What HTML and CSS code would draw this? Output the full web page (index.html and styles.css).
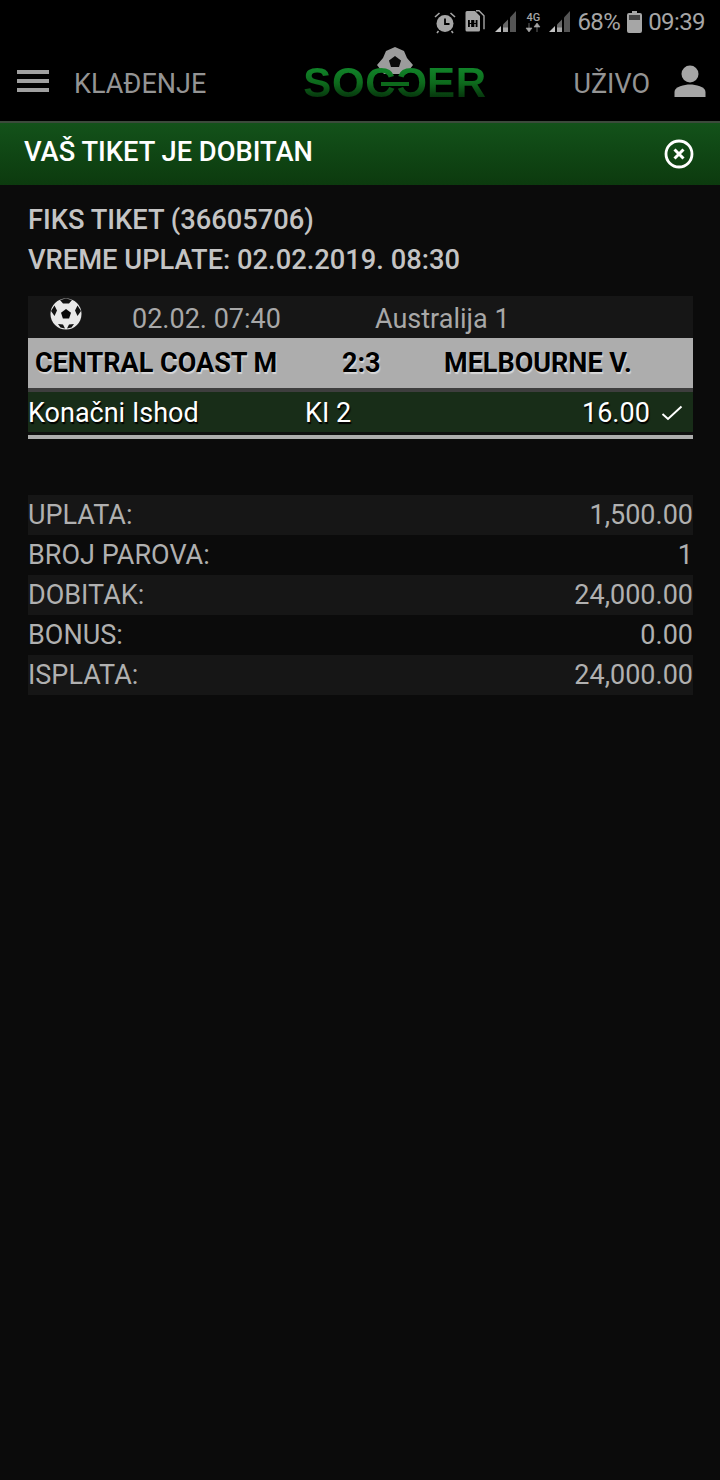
FILE: index.html
```html
<!DOCTYPE html>
<html lang="en">
<head>
    <meta charset="UTF-8">
    <meta name="viewport" content="width=device-width, initial-scale=1.0">
    <title>Tiket</title>
    <link rel="stylesheet" href="styles.css">
</head>
<body>
    <div class="status-bar">
        <svg class="st-alarm" width="22" height="23" viewBox="0 0 22 23">
            <circle cx="11" cy="12.500" r="8.500" fill="#a6a6a6"/>
            <path d="M11 7.500v5.500h4.500" fill="none" stroke="#000" stroke-width="1.800"/>
            <path d="M1 6 5.500 2M21 6 16.500 2M4.500 20l-1.500 2M17.500 20l1.500 2" stroke="#a6a6a6" stroke-width="1.600"/>
        </svg>
        <svg class="st-sim" width="20" height="22" viewBox="0 0 20 22">
            <path d="M2 1h8l5 5v14a1.500 1.500 0 0 1-1.500 1.500H2A1.500 1.500 0 0 1 .500 20V2.500A1.500 1.500 0 0 1 2 1z" fill="#a6a6a6"/>
            <path d="M11 .700h3l5 5v13.500" fill="none" stroke="#a6a6a6" stroke-width="1.400"/>
            <path d="M3 10h9.500v7H3z" fill="#000"/>
            <path d="M5.500 10v3M10 10v3M5.500 17v-3M10 17v-3" stroke="#a6a6a6" stroke-width="1.300"/>
        </svg>
        <svg class="st-signal" width="22" height="22" viewBox="0 0 22 22">
            <path d="M15 7.500 21 1v21h-6z" fill="#555"/>
            <path d="M8 14.500l5-5V22H8z" fill="#666"/>
            <path d="M8 17.500l5 0V22H8z" fill="#a6a6a6"/>
            <path d="M0 22l6-6v6z" fill="#c4c4c4"/>
        </svg>
        <div class="st-net">
            <span class="st-4g">4G</span>
            <svg width="16" height="9" viewBox="0 0 16 9">
                <path d="M4 0v5M1 5h6L4 9zM12 9V4M9 4h6l-3-4z" fill="#a6a6a6" stroke="#a6a6a6" stroke-width=".6"/>
            </svg>
        </div>
        <svg class="st-signal" width="22" height="22" viewBox="0 0 22 22">
            <path d="M15 7.500 21 1v21h-6z" fill="#555"/>
            <path d="M8 14.500l5-5V22H8z" fill="#666"/>
            <path d="M8 17.500l5 0V22H8z" fill="#a6a6a6"/>
            <path d="M0 22l6-6v6z" fill="#c4c4c4"/>
        </svg>
        <span class="st-text st-pct">68%</span>
        <svg class="st-batt" width="15" height="22" viewBox="0 0 15 22">
            <path d="M5 0h5v2h3a2 2 0 0 1 2 2v16a2 2 0 0 1-2 2H2a2 2 0 0 1-2-2V4a2 2 0 0 1 2-2h3z" fill="#a6a6a6"/>
            <rect x="2" y="4" width="11" height="5" fill="#444"/>
        </svg>
        <span class="st-text">09:39</span>
    </div>

    <header class="topbar">
        <div class="menu-icon"><span></span><span></span><span></span></div>
        <a class="top-link kladenje">KLAĐENJE</a>
        <div class="logo">
            <svg class="logo-ball" width="36" height="27" viewBox="0 0 36 27">
                <path d="M9 4 18 0l9 4 3 7 6 7-7 9H7l-7-9 6-7z" fill="#9c9c9c"/>
                <path d="M18 9l6 4.500-2 6.500h-8l-2-6.500z" fill="#0a0a0a"/>
            </svg>
            <span class="logo-text">SOC<span class="logo-flip">C</span>ER</span>
            <span class="logo-link"></span>
        </div>
        <a class="top-link uzivo">UŽIVO</a>
        <svg class="user-icon" width="34" height="32" viewBox="0 0 34 32">
            <circle cx="17" cy="9" r="8.500" fill="#a6a6a6"/>
            <path d="M1.500 32v-5c0-5.500 10-7.500 15.500-7.500s15.500 2 15.500 7.500v5z" fill="#a6a6a6"/>
        </svg>
    </header>

    <div class="banner">
        <span class="banner-title">VAŠ TIKET JE DOBITAN</span>
        <svg class="banner-close" width="30" height="30" viewBox="0 0 30 30">
            <circle cx="15" cy="15" r="13" fill="none" stroke="#fff" stroke-width="2.800"/>
            <path d="M10.500 10.500l9 9M19.500 10.500l-9 9" stroke="#fff" stroke-width="3"/>
        </svg>
    </div>

    <main class="content">
        <div class="ticket-head">
            <div>FIKS TIKET (36605706)</div>
            <div>VREME UPLATE: 02.02.2019. 08:30</div>
        </div>

        <div class="match">
            <div class="match-info">
                <svg class="ball" width="34" height="34" viewBox="0 0 34 34">
                    <circle cx="17" cy="17" r="15.500" fill="#e8e8e8"/>
                    <path d="M17 12l5 3.700-1.900 5.800h-6.200L12 15.700z" fill="#0a0a0a"/>
                    <path d="M11 3 17 1.500 23 3l-3 3.500h-6zM2 14l3.500-5.500 2.500 5-2.500 5.500zM32 14l-3.500-5.500-2.500 5 2.500 5.500zM9 27l5 .5 2 4-4.500-1zM25 27l-5 .5-2 4 4.500-1z" fill="#111"/>
                </svg>
                <span class="match-date">02.02. 07:40</span>
                <span class="match-league">Australija 1</span>
            </div>
            <div class="match-teams">
                <span class="team-home">CENTRAL COAST M</span>
                <span class="score">2:3</span>
                <span class="team-away">MELBOURNE V.</span>
            </div>
            <div class="match-pick">
                <span class="pick-name">Konačni Ishod</span>
                <span class="pick-code">KI 2</span>
                <span class="pick-odd">16.00</span>
                <svg class="pick-check" width="22" height="16" viewBox="0 0 22 16">
                    <path d="M1.500 9l5.500 5L20.500 1.500" fill="none" stroke="#fff" stroke-width="2"/>
                </svg>
            </div>
        </div>

        <div class="summary">
            <div class="sum-row"><span>UPLATA:</span><span>1,500.00</span></div>
            <div class="sum-row"><span>BROJ PAROVA:</span><span>1</span></div>
            <div class="sum-row"><span>DOBITAK:</span><span>24,000.00</span></div>
            <div class="sum-row"><span>BONUS:</span><span>0.00</span></div>
            <div class="sum-row"><span>ISPLATA:</span><span>24,000.00</span></div>
        </div>
    </main>
</body>
</html>
```

FILE: styles.css
```css
* {
    margin: 0;
    padding: 0;
    box-sizing: border-box;
    font-family: Roboto, sans-serif;
}

body {
    width: 720px;
    min-height: 1480px;
    background: #0b0b0b;
    overflow: hidden;
}

.status-bar {
    height: 44px;
    background: #000;
    display: flex;
    align-items: center;
    justify-content: flex-end;
    padding: 0 15px 0 0;
    color: #a6a6a6;
}

.st-alarm { margin-right: 9px; }
.st-sim { margin-right: 10px; margin-top: -3px; }
.st-signal { margin-right: 8px; margin-top: -2px; }

.st-net {
    display: flex;
    flex-direction: column;
    align-items: center;
    width: 16px;
    margin-right: 8px;
    margin-top: -1px;
}

.st-4g {
    font-size: 11px;
    font-weight: 500;
    line-height: 11px;
}

.st-text {
    font-size: 24px;
    line-height: 44px;
    letter-spacing: -0.6px;
}

.st-pct { margin-left: -2px; }
.st-batt { margin: 0 6px 0 7px; }

.topbar {
    height: 77px;
    background: #000;
    position: relative;
    display: flex;
    align-items: center;
    padding: 0 13px 0 17px;
    color: #949494;
}

.menu-icon {
    width: 32px;
    display: flex;
    flex-direction: column;
    gap: 5px;
    margin-top: -3px;
}

.menu-icon span {
    display: block;
    height: 4px;
    background: #a0a0a0;
}

.top-link {
    font-size: 27px;
    line-height: 32px;
    margin-top: 3px;
}

.kladenje { margin-left: 25px; }
.uzivo { margin-left: auto; }
.user-icon { margin-left: 23px; margin-top: -4px; }

.logo {
    position: absolute;
    left: 302px;
    top: 3px;
    width: 186px;
    height: 54px;
    filter: blur(0.6px);
}

.logo-ball {
    position: absolute;
    left: 75px;
    top: 0;
}

.logo-text {
    position: absolute;
    left: 0;
    right: 0;
    top: 13px;
    text-align: center;
    font-family: "Liberation Sans", sans-serif;
    font-size: 42px;
    line-height: 46px;
    font-weight: 700;
    letter-spacing: 0.6px;
    background: linear-gradient(180deg, #11852a 15%, #0d6a1c 50%, #05300b 85%);
    -webkit-background-clip: text;
    background-clip: text;
    color: transparent;
}

.logo-flip {
    display: inline-block;
    font-family: "Liberation Sans", sans-serif;
    transform: scaleX(-1);
    background: linear-gradient(180deg, #11852a 15%, #0d6a1c 50%, #05300b 85%);
    -webkit-background-clip: text;
    background-clip: text;
    color: transparent;
}

.logo-link {
    position: absolute;
    left: 79px;
    top: 35px;
    width: 28px;
    height: 4px;
    background: #0d6a1c;
}

.banner {
    height: 64px;
    display: flex;
    align-items: center;
    justify-content: space-between;
    padding: 0 26px 0 24px;
    background: linear-gradient(180deg, #13521a 0%, #0c3a0e 100%);
    border-top: 2px solid #3c4a3c;
}

.banner-title {
    color: #fff;
    font-size: 27.3px;
    font-weight: 500;
    margin-top: -4px;
}

.banner-close { margin-top: -1px; }

.content {
    padding: 15px 27px 0 28px;
}

.ticket-head {
    color: #c4c4c4;
    font-size: 27.3px;
    font-weight: 500;
    line-height: 40px;
    margin-bottom: 16px;
}

.match-info {
    height: 42px;
    padding-top: 4px;
    background: #161616;
    display: flex;
    align-items: center;
    color: #a8a8a8;
    font-size: 27px;
    position: relative;
}

.ball {
    position: absolute;
    left: 21px;
    top: 1px;
    filter: blur(0.6px);
}

.match-date { margin-left: 104px; width: 243px; }

.match-teams {
    height: 50px;
    background: #adadad;
    display: flex;
    align-items: center;
    color: #000;
    font-size: 27px;
    font-weight: 700;
    text-shadow: 1px 2px 1px #d8d8d8;
}

.team-home { margin-left: 7px; width: 307px; }
.score { width: 102px; }

.match-pick {
    height: 51px;
    padding-bottom: 2px;
    background: #182d18;
    border-top: 4px solid #3e3e3e;
    border-bottom: 4px solid #adadad;
    box-shadow: inset 0 -3px 0 #0f0f0f;
    display: flex;
    align-items: center;
    color: #fff;
    font-size: 27px;
    text-shadow: 1px 2px 1px #000;
}

.pick-name { width: 277px; }
.pick-code { width: 277px; }
.pick-check { margin-left: 11px; }

.summary {
    margin-top: 56px;
    color: #b0b0b0;
    font-size: 27px;
}

.sum-row {
    height: 40px;
    display: flex;
    align-items: center;
    justify-content: space-between;
}

.sum-row:nth-child(odd) {
    background: #161616;
}
```
